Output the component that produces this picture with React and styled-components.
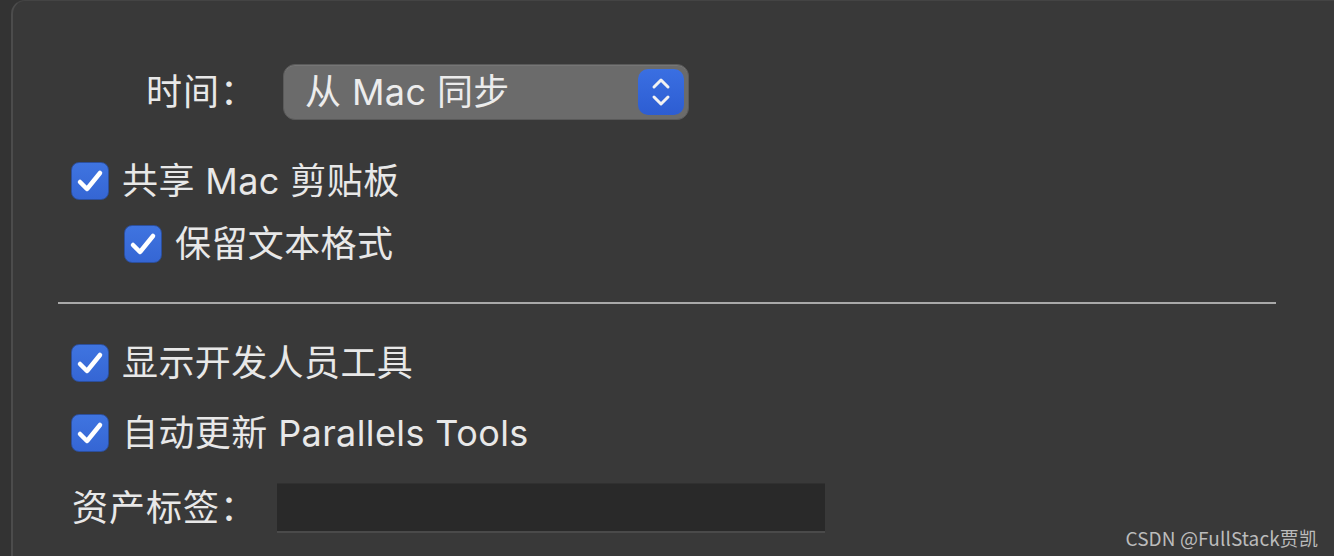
import styled, { createGlobalStyle } from 'styled-components';

const GlobalStyle = createGlobalStyle`
  html, body {
    margin: 0;
    padding: 0;
    background: #333333;
    width: 1334px;
    height: 556px;
    overflow: hidden;
  }
  body {
    font-family: Inter, "Noto Sans CJK SC", sans-serif;
    -webkit-font-smoothing: antialiased;
  }
`;

const Page = styled.div`
  position: relative;
  width: 1334px;
  height: 556px;
  padding-left: 11px;
  box-sizing: border-box;
`;

const Panel = styled.div`
  height: 100%;
  box-sizing: border-box;
  background: #393939;
  border-left: 2px solid #4c4c4c;
  border-top: 1px solid #444;
  border-top-left-radius: 14px;
  padding-top: 63px;
  display: flex;
  flex-direction: column;
  color: #e6e6e6;
  font-size: 36px;
`;

const FieldRow = styled.div`
  display: flex;
  align-items: center;
  height: ${({ $height }) => $height}px;
  margin-top: ${({ $top }) => $top || 0}px;
`;

const Label = styled.div`
  width: 244px;
  text-align: right;
  line-height: 1;
  color: #e8e8e8;
  letter-spacing: 1px;
`;

const Select = styled.div`
  margin-left: ${({ $gap }) => $gap}px;
  width: 406px;
  height: 56px;
  box-sizing: border-box;
  border-radius: 12px;
  background: #6b6b6b;
  border: 1px solid #5a5a5a;
  box-shadow: inset 0 1px 0 rgba(255, 255, 255, 0.08);
  display: flex;
  align-items: center;
  justify-content: space-between;
  padding: 0 4px 0 21px;
`;

const SelectText = styled.span`
  color: #ececec;
  line-height: 1;
  letter-spacing: 0.4px;
`;

const Stepper = styled.div`
  width: 46px;
  height: 46px;
  border-radius: 10px;
  background: linear-gradient(#3a6fe2, #2d5dd2);
  display: flex;
  align-items: center;
  justify-content: center;
`;

const CheckRow = styled.label`
  display: flex;
  align-items: center;
  gap: 13px;
  height: 40px;
  margin-top: ${({ $top }) => $top}px;
  padding-left: ${({ $indent }) => $indent}px;
  line-height: 1;
  color: #e8e8e8;
  letter-spacing: 0.4px;
`;

const Box = styled.span`
  width: 38px;
  height: 38px;
  flex: none;
  box-sizing: border-box;
  border-radius: 8px;
  background: linear-gradient(#3f74e0, #3566d4);
  border: 1px solid #2c4f9c;
  display: flex;
  align-items: center;
  justify-content: center;
`;

const Divider = styled.div`
  margin: 38px 0 0 45px;
  width: 1218px;
  height: 2px;
  background: #a9a9a9;
`;

const TextInput = styled.div`
  margin-left: ${({ $gap }) => $gap}px;
  width: 548px;
  height: 50px;
  box-sizing: border-box;
  background: #292929;
  border-top: 1px solid #303030;
  border-bottom: 2px solid #4a4a4a;
`;

const Watermark = styled.div`
  position: absolute;
  right: 16px;
  bottom: 9px;
  font-family: "Noto Sans CJK SC", sans-serif;
  font-size: 19px;
  color: #bcbcbc;
  line-height: 1;
  letter-spacing: 0.1px;
`;

function Check() {
  return (
    <svg width="30" height="26" viewBox="0 0 30 26" fill="none">
      <path
        d="M5 14 L12 21 L25 5"
        stroke="#fff"
        strokeWidth="4.5"
        strokeLinecap="round"
        strokeLinejoin="round"
      />
    </svg>
  );
}

function Chevrons() {
  return (
    <svg width="22" height="32" viewBox="0 0 22 32" fill="none">
      <path
        d="M4 11 L11 4 L18 11 M4 21 L11 28 L18 21"
        stroke="#f2f2f2"
        strokeWidth="3"
        strokeLinecap="round"
        strokeLinejoin="round"
      />
    </svg>
  );
}

function Checkbox({ top, indent, children }) {
  return (
    <CheckRow $top={top} $indent={indent}>
      <Box>
        <Check />
      </Box>
      {children}
    </CheckRow>
  );
}

export default function App() {
  return (
    <>
      <GlobalStyle />
      <Page>
        <Panel>
          <FieldRow $height={56}>
            <Label>时间：</Label>
            <Select $gap={26}>
              <SelectText>从 Mac 同步</SelectText>
              <Stepper>
                <Chevrons />
              </Stepper>
            </Select>
          </FieldRow>
          <Checkbox top={41} indent={58}>共享 Mac 剪贴板</Checkbox>
          <Checkbox top={23} indent={111}>保留文本格式</Checkbox>
          <Divider />
          <Checkbox top={39} indent={58}>显示开发人员工具</Checkbox>
          <Checkbox top={30} indent={58}>自动更新 Parallels Tools</Checkbox>
          <FieldRow $height={50} $top={30}>
            <Label>资产标签：</Label>
            <TextInput $gap={20} />
          </FieldRow>
        </Panel>
        <Watermark>CSDN @FullStack贾凯</Watermark>
      </Page>
    </>
  );
}
